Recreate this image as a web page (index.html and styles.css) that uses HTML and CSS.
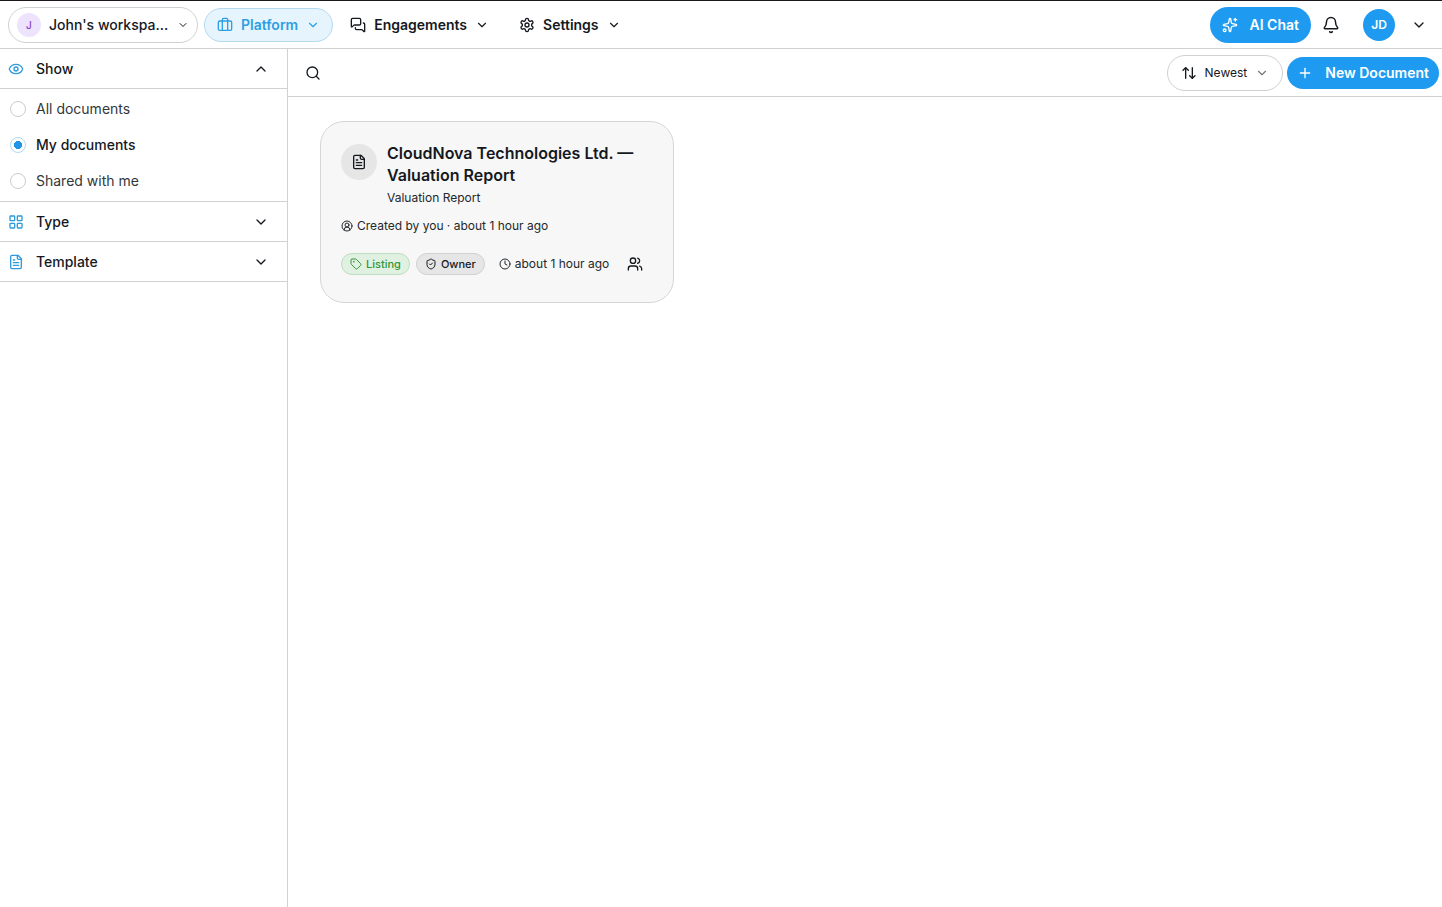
FILE: index.html
```html
<!DOCTYPE html>
<html lang="en">
<head>
<meta charset="utf-8">
<meta name="viewport" content="width=device-width, initial-scale=1">
<title>Documents</title>
<link rel="stylesheet" href="styles.css">
</head>
<body>
<svg class="sprite" aria-hidden="true">
  <symbol id="down" viewBox="0 0 24 24"><path d="m6 9 6 6 6-6"/></symbol>
  <symbol id="up" viewBox="0 0 24 24"><path d="m18 15-6-6-6 6"/></symbol>
  <symbol id="file" viewBox="0 0 24 24"><path d="M15 2H6a2 2 0 0 0-2 2v16a2 2 0 0 0 2 2h12a2 2 0 0 0 2-2V7Z"/><path d="M14 2v4a2 2 0 0 0 2 2h4"/><path d="M10 9H8"/><path d="M16 13H8"/><path d="M16 17H8"/></symbol>
</svg>
<header class="topbar">
  <button class="workspace" type="button">
    <span class="workspace-badge">J</span>
    <span class="workspace-name">John's workspa...</span>
    <svg class="icon icon-xs"><use href="#down"/></svg>
  </button>
  <nav class="nav">
    <button class="nav-item nav-item-active" type="button">
      <svg class="icon" viewBox="0 0 24 24"><path d="M16 20V4a2 2 0 0 0-2-2h-4a2 2 0 0 0-2 2v16"/><rect width="20" height="14" x="2" y="6" rx="2"/></svg>
      Platform
      <svg class="icon icon-sm"><use href="#down"/></svg>
    </button>
    <button class="nav-item" type="button">
      <svg class="icon" viewBox="0 0 24 24"><path d="M16 10a2 2 0 0 1-2 2H6.828a2 2 0 0 0-1.414.586l-2.202 2.202A.71.71 0 0 1 2 14.286V4a2 2 0 0 1 2-2h10a2 2 0 0 1 2 2z"/><path d="M20 9a2 2 0 0 1 2 2v10.286a.71.71 0 0 1-1.212.502l-2.202-2.202A2 2 0 0 0 17.172 19H10a2 2 0 0 1-2-2v-1"/></svg>
      Engagements
      <svg class="icon icon-sm"><use href="#down"/></svg>
    </button>
    <button class="nav-item" type="button">
      <svg class="icon" viewBox="0 0 24 24"><path d="M12.22 2h-.44a2 2 0 0 0-2 2v.18a2 2 0 0 1-1 1.73l-.43.25a2 2 0 0 1-2 0l-.15-.08a2 2 0 0 0-2.73.73l-.22.38a2 2 0 0 0 .73 2.73l.15.1a2 2 0 0 1 1 1.72v.51a2 2 0 0 1-1 1.74l-.15.09a2 2 0 0 0-.73 2.73l.22.38a2 2 0 0 0 2.73.73l.15-.08a2 2 0 0 1 2 0l.43.25a2 2 0 0 1 1 1.73V20a2 2 0 0 0 2 2h.44a2 2 0 0 0 2-2v-.18a2 2 0 0 1 1-1.73l.43-.25a2 2 0 0 1 2 0l.15.08a2 2 0 0 0 2.73-.73l.22-.39a2 2 0 0 0-.73-2.73l-.15-.08a2 2 0 0 1-1-1.74v-.5a2 2 0 0 1 1-1.74l.15-.09a2 2 0 0 0 .73-2.73l-.22-.38a2 2 0 0 0-2.73-.73l-.15.08a2 2 0 0 1-2 0l-.43-.25a2 2 0 0 1-1-1.73V4a2 2 0 0 0-2-2z"/><circle cx="12" cy="12" r="3"/></svg>
      Settings
      <svg class="icon icon-sm"><use href="#down"/></svg>
    </button>
  </nav>
  <div class="account">
    <button class="primary chat" type="button">
      <svg class="icon" viewBox="0 0 24 24"><path d="M11.017 2.814a1 1 0 0 1 1.966 0l1.051 5.558a2 2 0 0 0 1.594 1.594l5.558 1.051a1 1 0 0 1 0 1.966l-5.558 1.051a2 2 0 0 0-1.594 1.594l-1.051 5.558a1 1 0 0 1-1.966 0l-1.051-5.558a2 2 0 0 0-1.594-1.594l-5.558-1.051a1 1 0 0 1 0-1.966l5.558-1.051a2 2 0 0 0 1.594-1.594z"/><path d="M20 2v4"/><path d="M22 4h-4"/><circle cx="4" cy="20" r="2"/></svg>
      AI Chat
    </button>
    <button class="bell" type="button" aria-label="Notifications">
      <svg class="icon icon-lg" viewBox="0 0 24 24"><path d="M10.268 21a2 2 0 0 0 3.464 0"/><path d="M3.262 15.326A1 1 0 0 0 4 17h16a1 1 0 0 0 .74-1.673C19.41 13.956 18 12.499 18 8A6 6 0 0 0 6 8c0 4.499-1.411 5.956-2.738 7.326"/></svg>
    </button>
    <button class="profile" type="button" aria-label="Account menu">
      <span class="avatar">JD</span>
      <svg class="icon"><use href="#down"/></svg>
    </button>
  </div>
</header>
<div class="layout">
  <aside class="sidebar">
    <button class="section" type="button" aria-expanded="true">
      <svg class="icon accent" viewBox="0 0 24 24"><path d="M2.062 12.348a1 1 0 0 1 0-.696 10.75 10.75 0 0 1 19.876 0 1 1 0 0 1 0 .696 10.75 10.75 0 0 1-19.876 0"/><circle cx="12" cy="12" r="3"/></svg>
      <span class="section-name">Show</span>
      <svg class="icon"><use href="#up"/></svg>
    </button>
    <div class="options" role="radiogroup" aria-label="Show">
      <label class="option"><input class="radio" type="radio" name="show">All documents</label>
      <label class="option option-on"><input class="radio" type="radio" name="show" checked>My documents</label>
      <label class="option"><input class="radio" type="radio" name="show">Shared with me</label>
    </div>
    <button class="section" type="button" aria-expanded="false">
      <svg class="icon accent" viewBox="0 0 24 24"><rect width="7" height="7" x="3" y="3" rx="1"/><rect width="7" height="7" x="14" y="3" rx="1"/><rect width="7" height="7" x="14" y="14" rx="1"/><rect width="7" height="7" x="3" y="14" rx="1"/></svg>
      <span class="section-name">Type</span>
      <svg class="icon"><use href="#down"/></svg>
    </button>
    <button class="section" type="button" aria-expanded="false">
      <svg class="icon accent"><use href="#file"/></svg>
      <span class="section-name">Template</span>
      <svg class="icon"><use href="#down"/></svg>
    </button>
  </aside>
  <main class="content">
    <div class="toolbar">
      <button class="search" type="button" aria-label="Search">
        <svg class="icon" viewBox="0 0 24 24"><circle cx="11" cy="11" r="8"/><path d="m21 21-4.340-4.340"/></svg>
      </button>
      <button class="sort" type="button">
        <svg class="icon" viewBox="0 0 24 24"><path d="m3 8 4-4 4 4"/><path d="M7 4v16"/><path d="m21 16-4 4-4-4"/><path d="M17 20V4"/></svg>
        Newest
        <svg class="icon icon-sm muted"><use href="#down"/></svg>
      </button>
      <button class="primary create" type="button">
        <svg class="icon" viewBox="0 0 24 24"><path d="M5 12h14"/><path d="M12 5v14"/></svg>
        New Document
      </button>
    </div>
    <div class="cards">
      <article class="card">
        <div class="card-head">
          <span class="card-icon"><svg class="icon"><use href="#file"/></svg></span>
          <div class="card-titles">
            <h2 class="card-title">CloudNova Technologies Ltd. — Valuation Report</h2>
            <p class="card-kind">Valuation Report</p>
          </div>
        </div>
        <p class="meta">
          <svg class="icon icon-xs" viewBox="0 0 24 24"><path d="M18 20a6 6 0 0 0-12 0"/><circle cx="12" cy="10" r="4"/><circle cx="12" cy="12" r="10"/></svg>
          Created by you · about 1 hour ago
        </p>
        <div class="tags">
          <span class="tag tag-green">
            <svg class="icon icon-xs" viewBox="0 0 24 24"><path d="M12.586 2.586A2 2 0 0 0 11.172 2H4a2 2 0 0 0-2 2v7.172a2 2 0 0 0 .586 1.414l8.704 8.704a2.426 2.426 0 0 0 3.420 0l6.580-6.580a2.426 2.426 0 0 0 0-3.420z"/><circle cx="7.500" cy="7.500" r=".5"/></svg>
            Listing
          </span>
          <span class="tag">
            <svg class="icon icon-xs" viewBox="0 0 24 24"><path d="M20 13c0 5-3.500 7.500-7.660 8.950a1 1 0 0 1-.67-.01C7.500 20.500 4 18 4 13V6a1 1 0 0 1 1-1c2 0 4.500-1.200 6.240-2.720a1.170 1.170 0 0 1 1.520 0C14.510 3.810 17 5 19 5a1 1 0 0 1 1 1z"/><path d="m9 12 2 2 4-4"/></svg>
            Owner
          </span>
          <span class="meta tags-time">
            <svg class="icon icon-xs" viewBox="0 0 24 24"><circle cx="12" cy="12" r="10"/><path d="M12 6v6l4 2"/></svg>
            about 1 hour ago
          </span>
          <button class="people" type="button" aria-label="People">
            <svg class="icon" viewBox="0 0 24 24"><path d="M16 21v-2a4 4 0 0 0-4-4H6a4 4 0 0 0-4 4v2"/><circle cx="9" cy="7" r="4"/><path d="M22 21v-2a4 4 0 0 0-3-3.870"/><path d="M16 3.130a4 4 0 0 1 0 7.750"/></svg>
          </button>
        </div>
      </article>
    </div>
  </main>
</div>
</body>
</html>
```
FILE: styles.css
```css
* { box-sizing: border-box; }
body {
  margin: 0;
  min-height: 100vh;
  display: flex;
  flex-direction: column;
  background: #fff;
  color: #15191e;
  font: 14px/20px Inter, "Liberation Sans", sans-serif;
}
button {
  display: flex;
  align-items: center;
  margin: 0;
  padding: 0;
  border: 0;
  background: none;
  color: inherit;
  font: inherit;
  white-space: nowrap;
  cursor: pointer;
}
h2, p { margin: 0; }
.sprite { display: none; }
.icon {
  flex: none;
  width: 16px;
  height: 16px;
  fill: none;
  stroke: currentColor;
  stroke-width: 2;
  stroke-linecap: round;
  stroke-linejoin: round;
}
.icon-xs { width: 12px; height: 12px; }
.icon-sm { width: 14px; height: 14px; }
.icon-lg { width: 18px; height: 18px; }
.accent { color: #2e9bdc; }
.muted { color: #777; }

.topbar {
  display: flex;
  align-items: center;
  gap: 6px;
  height: 49px;
  padding: 0 15px 0 8px;
  border-top: 1px solid #1b171c;
  border-bottom: 1px solid #d0d1d2;
}
.workspace {
  gap: 8px;
  min-width: 190px;
  height: 36px;
  padding: 0 8px;
  border: 1px solid #d0d1d2;
  border-radius: 18px;
  font-weight: 500;
}
.workspace-badge {
  display: grid;
  place-items: center;
  flex: none;
  width: 24px;
  height: 24px;
  border-radius: 50%;
  background: #eee3fd;
  color: #8b3fc4;
  font-size: 10px;
}
.workspace-name { flex: 1; text-align: left; }
.nav { display: flex; gap: 4px; }
.nav-item {
  gap: 8px;
  height: 34px;
  padding: 0 12px;
  border: 1px solid transparent;
  border-radius: 17px;
  font-weight: 600;
}
.nav-item-active {
  border-color: #b5d9ef;
  background: #e6f4fd;
  color: #2e9fe2;
}
.account { display: flex; align-items: center; margin-left: auto; }
.primary {
  border-radius: 18px;
  background: #1e9bf0;
  color: #fff;
  font-weight: 600;
}
.chat { gap: 12px; height: 36px; padding: 0 12px; }
.bell { justify-content: center; width: 40px; height: 36px; }
.profile { gap: 16px; margin-left: 12px; }
.avatar {
  display: grid;
  place-items: center;
  width: 32px;
  height: 32px;
  border-radius: 50%;
  background: #1e9bf0;
  color: #fff;
  font-size: 12px;
  font-weight: 600;
}

.layout { display: flex; flex: 1; }
.sidebar {
  flex: none;
  width: 288px;
  border-right: 1px solid #d0d1d2;
}
.section {
  gap: 12px;
  width: 100%;
  height: 40px;
  padding: 0 18px 0 8px;
  border-bottom: 1px solid #d0d1d2;
  font-weight: 500;
}
.section-name { flex: 1; text-align: left; }
.options { padding: 2px 0; border-bottom: 1px solid #d0d1d2; }
.option {
  display: flex;
  align-items: center;
  gap: 10px;
  height: 36px;
  padding: 0 10px;
  color: #33373b;
}
.option-on { color: inherit; font-weight: 500; }
.radio {
  appearance: none;
  flex: none;
  width: 16px;
  height: 16px;
  margin: 0;
  border: 1px solid #ccc;
  border-radius: 50%;
}
.radio:checked {
  border-color: #b5d9ef;
  background: radial-gradient(circle, #2196e8 0 4px, #fff 4px);
}

.content { flex: 1; min-width: 0; }
.toolbar {
  display: flex;
  align-items: center;
  gap: 4px;
  height: 48px;
  padding: 0 3px 0 17px;
  border-bottom: 1px solid #d0d1d2;
}
.search { margin-right: auto; }
.sort {
  gap: 8px;
  height: 36px;
  padding: 0 13px;
  border: 1px solid #d0d1d2;
  border-radius: 18px;
  font-size: 12px;
}
.create { gap: 12px; height: 32px; padding: 0 10px; }
.cards {
  display: grid;
  grid-template-columns: repeat(auto-fill, minmax(300px, 1fr));
  gap: 14px;
  padding: 24px 32px;
}
.card {
  padding: 20px 20px 27px;
  border: 1px solid #d5d6d7;
  border-radius: 24px;
  background: #f7f7f7;
}
.card-head { display: flex; gap: 10px; }
.card-icon {
  display: grid;
  place-items: center;
  flex: none;
  width: 36px;
  height: 36px;
  margin-top: 2px;
  border-radius: 50%;
  background: #e6e6e6;
}
.card-title { font-size: 16px; line-height: 22px; font-weight: 600; }
.card-kind { font-size: 12px; line-height: 24px; color: #24282c; }
.meta {
  display: flex;
  align-items: center;
  gap: 4px;
  font-size: 12px;
  color: #24282c;
}
.card > .meta { margin-top: 6px; }
.tags { display: flex; align-items: center; gap: 6px; margin-top: 17px; }
.tag {
  display: flex;
  align-items: center;
  gap: 4px;
  height: 22px;
  padding: 0 8px;
  border: 1px solid #d0d1d2;
  border-radius: 11px;
  background: #e6e6e6;
  font-size: 11px;
  font-weight: 500;
}
.tag-green {
  border-color: #bfddc1;
  background: #e0f1e1;
  color: #31963a;
}
.tags-time { margin-left: 8px; }
.people { margin-left: 12px; }
```
